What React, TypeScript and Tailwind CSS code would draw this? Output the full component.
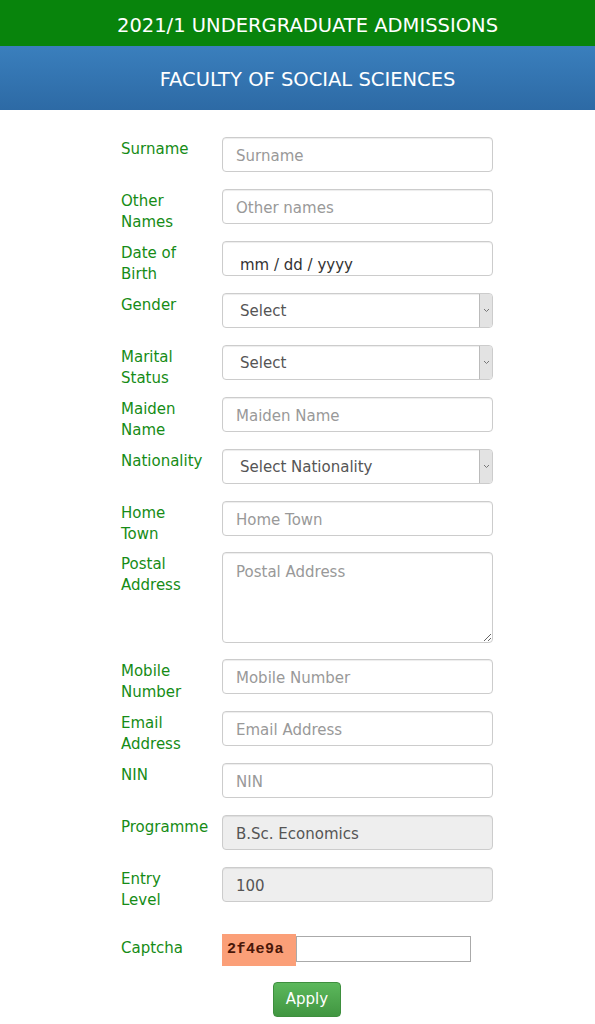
import React from 'react';

const font = "font-['DejaVu_Sans',Verdana,sans-serif]";

const inputCls =
  'h-[35px] w-full rounded-[4px] border border-[#ccc] px-[13px] pt-[2px] text-[15px] text-[#555] shadow-[inset_0_1px_1px_rgba(0,0,0,0.075)] outline-none placeholder:text-[#999]';

const Label: React.FC<{ children: React.ReactNode; className?: string }> = ({ children, className }) => (
  <label
    className={`max-h-[35px] w-[101px] shrink-0 text-[15px] leading-[21px] text-[#168c16] ${className ?? 'pt-[2px]'}`}
  >
    {children}
  </label>
);

const Row: React.FC<{ label: React.ReactNode; children: React.ReactNode; mb?: string }> = ({
  label,
  children,
  mb = 'mb-[17px]',
}) => (
  <div className={`flex items-start ${mb}`}>
    <Label>{label}</Label>
    <div className="w-[271px]">{children}</div>
  </div>
);

const FakeSelect: React.FC<{ text: string }> = ({ text }) => (
  <div className="relative flex h-[35px] w-full items-center rounded-[4px] border border-[#ccc] bg-white pl-[17px] pt-[2px] text-[15px] text-[#555] shadow-[inset_0_1px_1px_rgba(0,0,0,0.075)]">
    {text}
    <div className="absolute right-0 top-0 flex h-full w-[13px] items-center justify-center rounded-r-[3px] border-l border-[#bbb] bg-[#e3e3e3]">
      <svg width="7" height="5" viewBox="0 0 7 5" fill="none">
        <path d="M1 1l2.5 2.5L6 1" stroke="#777" strokeWidth="1" />
      </svg>
    </div>
  </div>
);

export default function App() {
  return (
    <div className={`min-h-screen bg-white ${font}`}>
      {/* Title bars */}
      <div className="flex h-[46px] items-center justify-center bg-[#08840c] pl-[20px] pt-[6px] text-[19.5px] text-white">
        2021/1 UNDERGRADUATE ADMISSIONS
      </div>
      <div className="flex h-[64px] items-center justify-center bg-gradient-to-b from-[#3a7fbd] to-[#2d6aa5] pl-[20px] pt-[4px] text-[19.5px] text-white">
        FACULTY OF SOCIAL SCIENCES
      </div>

      {/* Form */}
      <form className="ml-[121px] w-[372px] pt-[27px]" onSubmit={(e) => e.preventDefault()}>
        <Row label="Surname">
          <input className={`${inputCls} bg-white`} placeholder="Surname" />
        </Row>
        <Row label={<>Other<br />Names</>}>
          <input className={`${inputCls} bg-white`} placeholder="Other names" />
        </Row>
        <Row label={<>Date of<br />Birth</>}>
          <div className="flex h-[35px] w-full items-end overflow-hidden rounded-[4px] border border-[#ccc] bg-white pl-[17px] text-[15px] leading-[20px] text-[#333] shadow-[inset_0_1px_1px_rgba(0,0,0,0.075)]">
            mm / dd / yyyy
          </div>
        </Row>
        <Row label="Gender">
          <FakeSelect text="Select" />
        </Row>
        <Row label={<>Marital<br />Status</>}>
          <FakeSelect text="Select" />
        </Row>
        <Row label={<>Maiden<br />Name</>}>
          <input className={`${inputCls} bg-white`} placeholder="Maiden Name" />
        </Row>
        <Row label="Nationality">
          <FakeSelect text="Select Nationality" />
        </Row>
        <Row label={<>Home<br />Town</>} mb="mb-[16px]">
          <input className={`${inputCls} bg-white`} placeholder="Home Town" />
        </Row>
        <Row label={<>Postal<br />Address</>} mb="mb-[16px]">
          <textarea
            className="block h-[91px] w-full resize-y rounded-[4px] border border-[#ccc] bg-white px-[13px] py-[8px] text-[15px] text-[#555] shadow-[inset_0_1px_1px_rgba(0,0,0,0.075)] outline-none placeholder:text-[#999]"
            placeholder="Postal Address"
          />
        </Row>
        <Row label={<>Mobile<br />Number</>}>
          <input className={`${inputCls} bg-white`} placeholder="Mobile Number" />
        </Row>
        <Row label={<>Email<br />Address</>}>
          <input className={`${inputCls} bg-white`} placeholder="Email Address" />
        </Row>
        <Row label="NIN">
          <input className={`${inputCls} bg-white`} placeholder="NIN" />
        </Row>
        <Row label="Programme">
          <input className={`${inputCls} bg-[#eee]`} readOnly value="B.Sc. Economics" />
        </Row>
        <Row label={<>Entry<br />Level</>} mb="mb-[32px]">
          <input className={`${inputCls} bg-[#eee]`} readOnly value="100" />
        </Row>

        {/* Captcha */}
        <div className="flex items-start">
          <Label className="pt-[4px]">Captcha</Label>
          <div className="flex items-start">
            <div className="flex h-[32px] w-[74px] items-center bg-[#fb9f78] pl-[5px] font-['Liberation_Mono',monospace] text-[15px] font-bold tracking-[0.5px] text-[#4a1608]">
              2f4e9a
            </div>
            <input className="mt-[2px] h-[26px] w-[175px] border border-[#aaa] bg-white px-1 text-[14px] outline-none" />
          </div>
        </div>

        <div className="flex justify-center pt-[16px]">
          <button
            type="submit"
            className="h-[35px] w-[68px] rounded-[4px] border border-[#3e8f3e] bg-gradient-to-b from-[#5cb85c] to-[#419641] text-[15px] text-white"
          >
            Apply
          </button>
        </div>
      </form>
    </div>
  );
}
